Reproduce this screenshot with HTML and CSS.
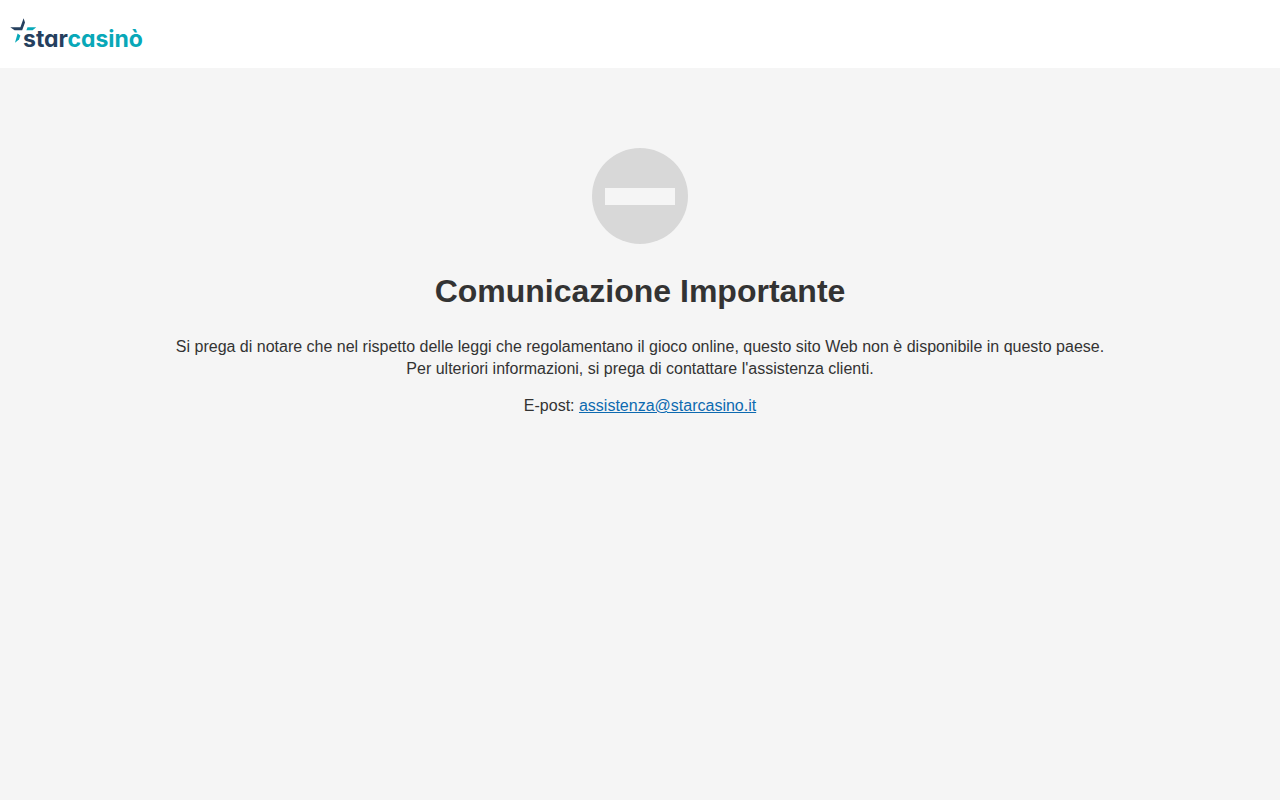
FILE: index.html
```html
<!DOCTYPE html>
<html lang="it">
  <head>
    <meta charset="UTF-8" />
    <meta name="viewport" content="width=device-width, initial-scale=1.0" />
    <title>Comunicazione Importante</title>
    <link rel="stylesheet" href="styles.css">
  </head>
  <body>
    <header class="header">
      <svg class="logo" viewBox="0 0 140 40" role="img" aria-label="starcasinò">
        <path class="logo-dark" d="M0.3 9.3H10.4L13.6 0.2L15 4.5L12.2 12.2H4.6Z" />
        <path class="logo-teal" d="M17.5 9.3H26.2L22.6 12.2H16.4Z" />
        <path class="logo-teal" d="M7.6 15.4L10.4 17.4L9 21.6L5 24.8Z" />
        <text class="logo-text" x="13" y="29"><tspan class="logo-dark">star</tspan><tspan class="logo-teal">casinò</tspan></text>
      </svg>
    </header>

    <main class="content">
      <svg class="icon" viewBox="0 0 96 96" aria-hidden="true">
        <circle cx="48" cy="48" r="48" fill="#d8d8d8" />
        <rect x="13" y="40" width="70" height="17" fill="#f5f5f5" />
      </svg>
      <h1>Comunicazione Importante</h1>
      <p>
        Si prega di notare che nel rispetto delle leggi che regolamentano il gioco online, questo sito Web non è disponibile in questo paese.<br>
        Per ulteriori informazioni, si prega di contattare l'assistenza clienti.
      </p>
      <p>E-post: <a href="mailto:assistenza@starcasino.it">assistenza@starcasino.it</a></p>
    </main>
  </body>
</html>
```
FILE: styles.css
```css
* {
  margin: 0;
  padding: 0;
  box-sizing: border-box;
}

body {
  font-family: "Liberation Sans", Arial, sans-serif;
  font-size: 16px;
  line-height: 22px;
  color: #333;
  background: #f5f5f5;
}

/* Header */
.header {
  padding: 18px 10px 10px;
  background: #fff;
}

.logo {
  display: block;
  width: 140px;
  height: 40px;
}

.logo-text {
  font-family: Inter, "Liberation Sans", sans-serif;
  font-size: 23px;
  font-weight: 700;
  font-feature-settings: "cv11"; /* single-storey a */
}

.logo-dark {
  fill: #253f5e;
}

.logo-teal {
  fill: #08a8b8;
}

/* Message */
.content {
  padding: 80px 20px;
  text-align: center;
}

.icon {
  display: block;
  width: 96px;
  height: 96px;
  margin: 0 auto 28px;
}

h1 {
  font-size: 32px;
  line-height: 38px;
  margin-bottom: 26px;
}

p {
  margin-bottom: 15px;
}

a {
  color: #0d6ab0;
}
```
